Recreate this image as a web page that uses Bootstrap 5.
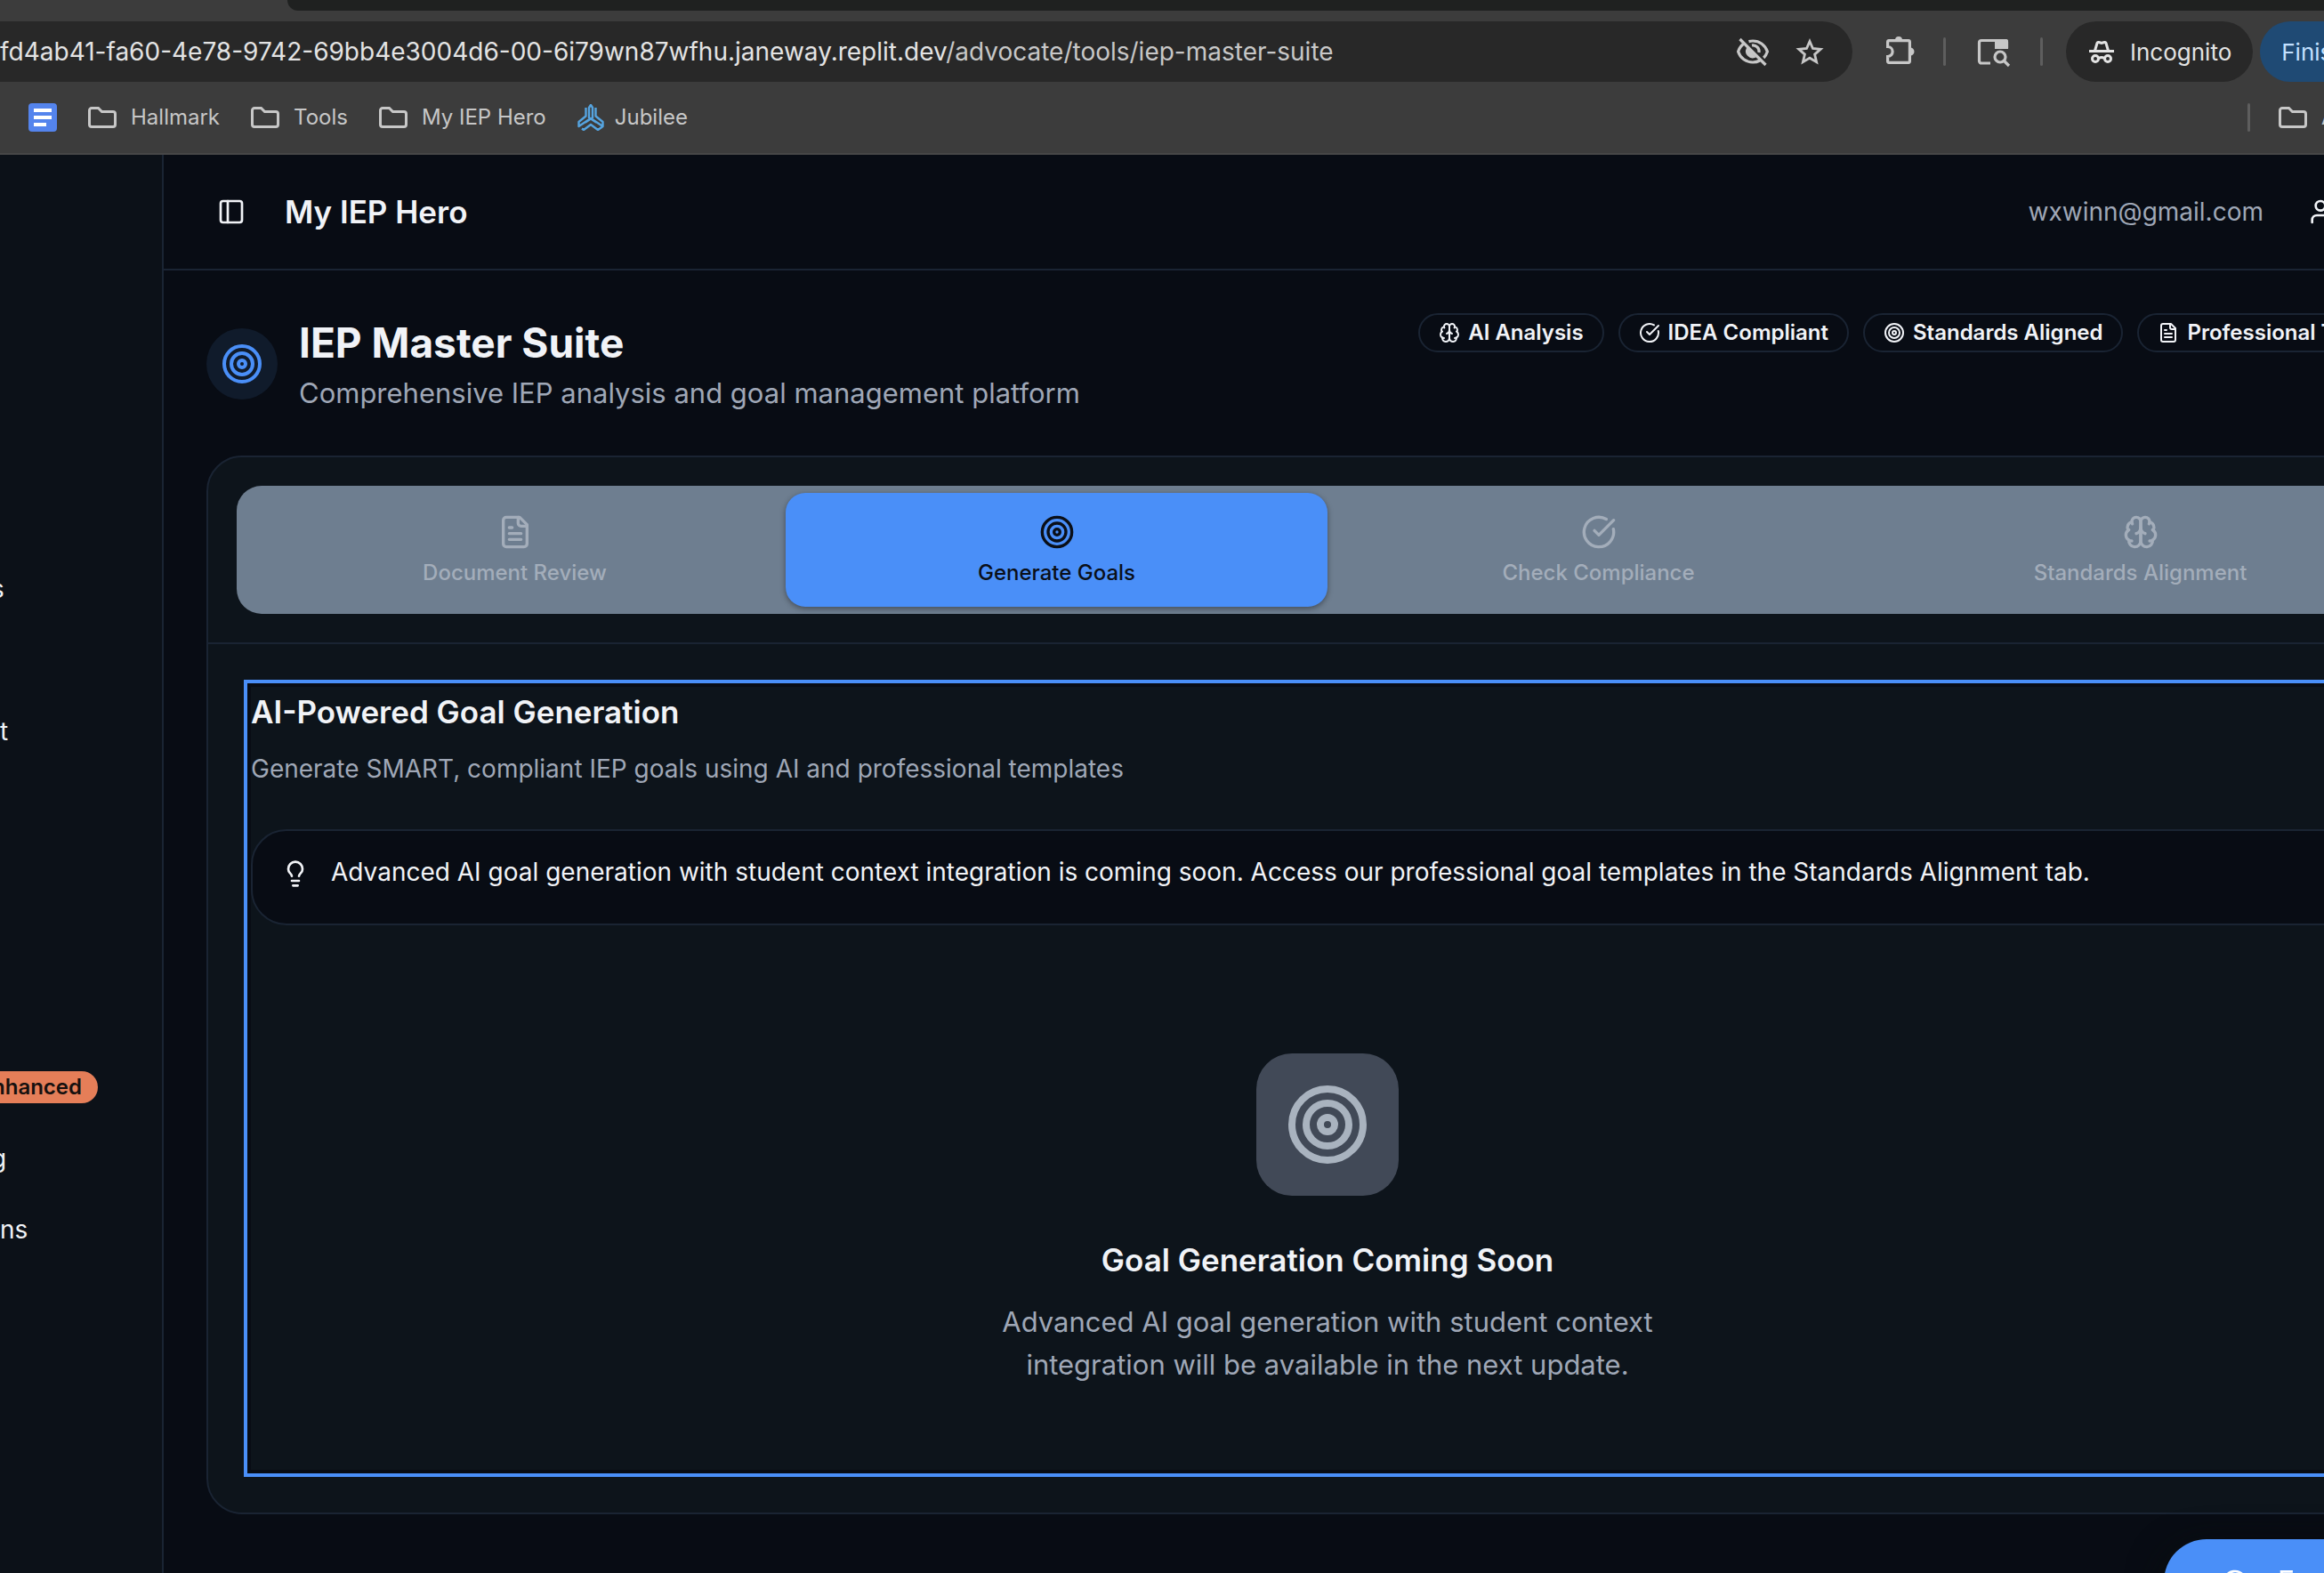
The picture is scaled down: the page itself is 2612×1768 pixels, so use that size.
<!DOCTYPE html>
<html lang="en">
<head>
<meta charset="utf-8">
<meta name="viewport" content="width=device-width, initial-scale=1">
<title>My IEP Hero</title>
<link href="https://cdn.jsdelivr.net/npm/bootstrap@5.3.0/dist/css/bootstrap.min.css" rel="stylesheet">
<style>
:root{--page:#080c14;--panel:#0d141b;--line:#1a2433;--blue:#4a8ff8;--ink:#f1f3f7;--soft:#9fa7b6}
html,body{height:100%}
body{font-family:Inter,"Noto Sans",sans-serif;font-size:28px;line-height:40px;background:var(--page);color:var(--ink);overflow:hidden}
svg{display:block;flex:none}
.lu{fill:none;stroke:currentColor;stroke-width:2;stroke-linecap:round;stroke-linejoin:round}
a,a:hover{color:inherit;text-decoration:none}
.btn-plain{border:0;padding:0;background:none;color:inherit}

.browser{background:#3c3c3c;border-bottom:2px solid #474747;color:#c7c7c7}
.tabstrip{height:12px;margin-left:323px;background:#1f2120;border-bottom-left-radius:20px}
.toolbar{padding:12px 0}
.address{height:68px;background:#282828;border-radius:0 34px 34px 0;padding-right:32px;min-width:0;gap:28px}
.host{color:#e3e3e3}
.tools{width:530px;padding-left:34px}
.sep{flex:none;width:3px;height:32px;border-radius:2px;background:#5e5e5e}
.tools .sep{margin:0 26px 0 32px}
.chip{height:68px;border-radius:34px;padding:2px 24px 0;background:#282828;color:#e3e3e3;font-size:26px}
.chip-blue{background:#1f4a74;color:#c2e0ff}
.bookmarks{height:68px;font-size:24px;line-height:32px;padding:0 0 12px 32px;gap:35px}
.bookmarks a{gap:16px}
.bookmarks .jubilee{gap:12px}
.other{width:86px;gap:32px}

.side{width:184px;background:#0c1118;border-right:2px solid var(--line);padding-top:448px}
.side li{height:80px}
.side .cut{text-indent:-10px}
.tag{height:36px;width:110px;background:#e57e58;color:#16110f;font-size:24px;font-weight:600;border-radius:0 18px 18px 0;padding-right:18px}
.stage{margin-right:-188px;min-width:0}
.apphead{height:130px;border-bottom:2px solid var(--line);padding-left:60px;padding-right:176px}
.apphead .brand{margin-left:44px}
.brand{font-size:35px;font-weight:600;line-height:56px}
.soft{color:var(--soft)}
.page{padding:48px}
.disc{width:80px;height:80px;background:#101b2b;color:var(--blue)}
.ttl{font-size:46px;line-height:66px;font-weight:700}
.sub{font-size:31px;line-height:48px}
.pill{height:44px;border:2px solid var(--line);border-radius:22px;padding:0 21px;gap:9px;font-size:24px;font-weight:600}
.panel{background:var(--panel);border:2px solid var(--line);border-radius:40px;margin-top:46px}
.panel-top{padding:32px;border-bottom:2px solid var(--line)}
.tabs{background:#6e7e90;border-radius:28px;padding:8px}
.tabs .nav-link{height:128px;border-radius:22px;padding:24px 0 0;gap:10px;font-size:24px;line-height:32px;font-weight:500;color:#a3adba}
.tabs .nav-link.active{background:var(--blue);color:#0a0f18;box-shadow:0 2px 6px rgba(0,0,0,.4)}
.panel-body{padding:48px}
.focusbox{box-shadow:0 0 0 4px var(--page),0 0 0 8px var(--blue)}
.note{margin-top:48px;min-height:108px;background:var(--page);border:2px solid var(--line);border-radius:40px;padding:24px 32px;gap:24px}
.note p{line-height:44px}
.note svg{margin-top:8px}
.empty{padding:96px 0 94px;margin-top:48px}
.tile{width:160px;height:160px;border-radius:40px;background:#414957;color:#a9b3bf;margin-bottom:44px}
.empty .sub{max-width:800px;margin-top:18px}
.fab{position:fixed;left:calc(100% - 180px);top:calc(100% - 38px);height:96px;width:340px;border-radius:48px;background:var(--blue);color:#fff;padding:0 64px;gap:32px;font-size:32px;box-shadow:0 10px 40px rgba(10,14,12,.9)}
</style>
</head>
<body class="d-flex flex-column">
<svg width="0" height="0" class="position-absolute" aria-hidden="true">
  <symbol id="target" viewBox="0 0 24 24"><circle cx="12" cy="12" r="10"/><circle cx="12" cy="12" r="6"/><circle cx="12" cy="12" r="2"/></symbol>
  <symbol id="doc" viewBox="0 0 24 24"><path d="M15 2H6a2 2 0 0 0-2 2v16a2 2 0 0 0 2 2h12a2 2 0 0 0 2-2V7Z"/><path d="M14 2v4a2 2 0 0 0 2 2h4M10 9H8M16 13H8M16 17H8"/></symbol>
  <symbol id="check" viewBox="0 0 24 24"><path d="M21.801 10A10 10 0 1 1 17 3.335"/><path d="m9 11 3 3L22 4"/></symbol>
  <symbol id="brain" viewBox="0 0 24 24"><path d="M12 5a3 3 0 1 0-5.997.125 4 4 0 0 0-2.526 5.77 4 4 0 0 0 .556 6.588A4 4 0 1 0 12 18Z"/><path d="M12 5a3 3 0 1 1 5.997.125 4 4 0 0 1 2.526 5.77 4 4 0 0 1-.556 6.588A4 4 0 1 1 12 18Z"/><path d="M15 13a4.5 4.5 0 0 1-3-4 4.5 4.5 0 0 1-3 4M17.599 6.5a3 3 0 0 0 .399-1.375M6.003 5.125A3 3 0 0 0 6.401 6.5M3.477 10.896a4 4 0 0 1 .585-.396M19.938 10.5a4 4 0 0 1 .585.396M6 18a4 4 0 0 1-1.967-.516M19.967 17.484A4 4 0 0 1 18 18"/></symbol>
  <symbol id="folder" viewBox="0 0 32 24"><path d="M1.500 4a2.500 2.500 0 0 1 2.500-2.500h7.500l4 4H28A2.500 2.500 0 0 1 30.500 8v12a2.500 2.500 0 0 1-2.500 2.500H4A2.500 2.500 0 0 1 1.500 20Z" fill="none" stroke="currentColor" stroke-width="3"/></symbol>
</svg>

<header class="browser flex-shrink-0 overflow-hidden text-nowrap">
  <div class="tabstrip"></div>
  <div class="toolbar d-flex">
    <div class="address d-flex align-items-center flex-grow-1">
      <div class="flex-grow-1 overflow-hidden"><span class="host">fd4ab41-fa60-4e78-9742-69bb4e3004d6-00-6i79wn87wfhu.janeway.replit.dev</span>/advocate/tools/iep-master-suite</div>
      <button class="btn-plain" aria-label="Third-party cookies blocked"><svg width="40" height="36" viewBox="0 0 40 36" fill="none" stroke="currentColor" stroke-width="3.200"><path d="M11 8.500C7.500 10.500 4.800 14 3.600 18c2.400 7.500 9 12 16.400 12 3 0 5.600-.7 8-2M15.500 6.600C17 6.200 18.500 6 20 6c7.500 0 14 4.500 16.400 12-.9 2.700-2.200 5-4.200 7"/><path d="M19 11a7 7 0 0 1 8 8"/><path d="M13.500 14.500a7 7 0 0 0 9 9.500z" fill="currentColor" stroke-width="1.500"/><path d="M5.500 4l29 29"/></svg></button>
      <button class="btn-plain" aria-label="Bookmark this tab"><svg width="32" height="32" viewBox="0 0 32 32" fill="none" stroke="currentColor" stroke-width="2.800"><path d="M16 4.500l3.500 8 8.700.8-6.600 5.800 2 8.600L16 23.200l-7.600 4.500 2-8.600-6.600-5.800 8.700-.8z"/></svg></button>
    </div>
    <div class="tools d-flex align-items-center flex-shrink-0">
      <button class="btn-plain" aria-label="Extensions"><svg width="36" height="36" viewBox="0 0 36 36" fill="none" stroke="currentColor" stroke-width="3.200"><path d="M7 5.600h22A1.500 1.500 0 0 1 30.400 7v22a1.500 1.500 0 0 1-1.400 1.400H7A1.500 1.500 0 0 1 5.600 29v-5.500a5.500 5.500 0 0 0 0-11V7A1.500 1.500 0 0 1 7 5.600z"/><path d="M14 5a4 4 0 0 1 8 0zM31 13.500a4.500 4.500 0 0 1 0 9z" fill="currentColor" stroke="none"/></svg></button>
      <span class="sep"></span>
      <button class="btn-plain" aria-label="Search tabs"><svg width="48" height="36" viewBox="0 0 48 36" fill="none" stroke="currentColor" stroke-width="3.200"><path d="M24 31H14a2.500 2.500 0 0 1-2.500-2.500V8A2.500 2.500 0 0 1 14 5.500h27A2 2 0 0 1 42.500 8v6"/><path d="M29 4h13a2 2 0 0 1 2 2v9H29z" fill="currentColor" stroke="none"/><circle cx="35" cy="24" r="6"/><path d="M39 28l6 6"/></svg></button>
      <span class="sep"></span>
      <button class="btn-plain chip d-flex align-items-center gap-3 flex-shrink-0"><svg width="32" height="32" viewBox="0 0 32 32" fill="none" stroke="currentColor" stroke-width="3"><path d="M8.500 14L11 5.500a1.500 1.500 0 0 1 2-1l3 1 3-1a1.500 1.500 0 0 1 2 1L23.500 14M2 14.500h28M13 22.500q3-2 6 0"/><circle cx="9" cy="23" r="3.500"/><circle cx="23" cy="23" r="3.500"/></svg>Incognito</button>
      <button class="btn-plain chip chip-blue ms-2 flex-shrink-0">Finish update</button>
    </div>
  </div>
  <nav class="bookmarks d-flex align-items-center">
    <a href="#" aria-label="Docs"><svg width="32" height="32" viewBox="0 0 32 32"><rect width="32" height="32" rx="4" fill="#5484ed"/><path d="M6 8h20M6 16h20M6 24h14" stroke="#fff" stroke-width="4"/></svg></a>
    <a href="#" class="d-flex align-items-center"><svg width="32" height="24"><use href="#folder"/></svg>Hallmark</a>
    <a href="#" class="d-flex align-items-center"><svg width="32" height="24"><use href="#folder"/></svg>Tools</a>
    <a href="#" class="d-flex align-items-center"><svg width="32" height="24"><use href="#folder"/></svg>My IEP Hero</a>
    <a href="#" class="jubilee d-flex align-items-center"><svg width="30" height="30" viewBox="0 0 30 30" fill="none" stroke="#55a4e0" stroke-width="2.400" stroke-linejoin="round"><path d="M9.500 4v9.500L1.500 20v5l13.500-9 13.500 9v-5l-8-6.500V4M13 16V4l2-3 2 3v12M5 27.500l2 1.500 8-6 8 6 5-3.500M9 20.500l6-4 6 4"/></svg>Jubilee</a>
    <div class="other d-flex align-items-center ms-auto flex-shrink-0"><span class="sep"></span><a href="#" class="d-flex align-items-center"><svg width="32" height="24"><use href="#folder"/></svg>All Bookmarks</a></div>
  </nav>
</header>

<div class="d-flex flex-grow-1 overflow-hidden">
  <aside class="side flex-shrink-0 overflow-hidden">
    <ul class="list-unstyled m-0">
      <li class="d-flex align-items-center"><a href="#" class="cut">s</a></li>
      <li></li>
      <li class="d-flex align-items-center"><a href="#">t</a></li>
      <li></li><li></li><li></li><li></li>
      <li class="d-flex align-items-center"><span class="tag d-flex align-items-center justify-content-end overflow-hidden">nhanced</span></li>
      <li class="d-flex align-items-center"><a href="#" class="cut">g</a></li>
      <li class="d-flex align-items-center"><a href="#">ns</a></li>
    </ul>
  </aside>
  <main class="stage flex-grow-1">
    <div class="apphead d-flex align-items-center">
      <button class="btn-plain" aria-label="Toggle sidebar"><svg class="lu" width="32" height="32" viewBox="0 0 24 24"><rect x="3" y="3" width="18" height="18" rx="2"/><path d="M9 3v18"/></svg></button>
      <span class="brand">My IEP Hero</span>
      <span class="soft ms-auto me-5">wxwinn@gmail.com</span>
      <button class="btn-plain" aria-label="Account"><svg class="lu" width="32" height="32" viewBox="0 0 24 24"><path d="M19 21v-2a4 4 0 0 0-4-4H9a4 4 0 0 0-4 4v2"/><circle cx="12" cy="7" r="4"/></svg></button>
    </div>
    <div class="page">
      <div class="d-flex justify-content-between align-items-start">
        <div class="d-flex align-items-center gap-4">
          <div class="disc rounded-circle d-flex align-items-center justify-content-center"><svg class="lu" width="48" height="48"><use href="#target"/></svg></div>
          <div>
            <h1 class="ttl m-0">IEP Master Suite</h1>
            <p class="sub soft m-0">Comprehensive IEP analysis and goal management platform</p>
          </div>
        </div>
        <div class="d-flex gap-3 text-nowrap">
          <span class="pill d-flex align-items-center"><svg class="lu" width="24" height="24"><use href="#brain"/></svg>AI Analysis</span>
          <span class="pill d-flex align-items-center"><svg class="lu" width="24" height="24"><use href="#check"/></svg>IDEA Compliant</span>
          <span class="pill d-flex align-items-center"><svg class="lu" width="24" height="24"><use href="#target"/></svg>Standards Aligned</span>
          <span class="pill d-flex align-items-center"><svg class="lu" width="24" height="24"><use href="#doc"/></svg>Professional Templates</span>
        </div>
      </div>
      <section class="panel">
        <div class="panel-top">
          <div class="tabs nav nav-pills nav-justified flex-nowrap" role="tablist">
            <button class="nav-link d-flex flex-column align-items-center" role="tab"><svg class="lu" width="40" height="40"><use href="#doc"/></svg>Document Review</button>
            <button class="nav-link active d-flex flex-column align-items-center" role="tab" aria-selected="true"><svg class="lu" width="40" height="40"><use href="#target"/></svg>Generate Goals</button>
            <button class="nav-link d-flex flex-column align-items-center" role="tab"><svg class="lu" width="40" height="40"><use href="#check"/></svg>Check Compliance</button>
            <button class="nav-link d-flex flex-column align-items-center" role="tab"><svg class="lu" width="40" height="40"><use href="#brain"/></svg>Standards Alignment</button>
          </div>
        </div>
        <div class="panel-body">
          <div class="focusbox" role="tabpanel">
            <h2 class="brand m-0">AI-Powered Goal Generation</h2>
            <p class="soft mt-3 mb-0">Generate SMART, compliant IEP goals using AI and professional templates</p>
            <div class="note d-flex align-items-start">
              <svg class="lu" width="32" height="32" viewBox="0 0 24 24"><path d="M15 14c.2-1 .7-1.700 1.500-2.500 1-.9 1.500-2.200 1.500-3.500A6 6 0 0 0 6 8c0 1 .2 2.200 1.500 3.500.7.7 1.300 1.500 1.500 2.500M9 18h6M10 22h4"/></svg>
              <p class="m-0">Advanced AI goal generation with student context integration is coming soon. Access our professional goal templates in the Standards Alignment tab.</p>
            </div>
            <div class="empty d-flex flex-column align-items-center text-center">
              <div class="tile d-flex align-items-center justify-content-center"><svg class="lu" width="96" height="96"><use href="#target"/></svg></div>
              <h3 class="brand m-0">Goal Generation Coming Soon</h3>
              <p class="sub soft mb-0">Advanced AI goal generation with student context integration will be available in the next update.</p>
            </div>
          </div>
        </div>
      </section>
    </div>
  </main>
</div>
<button class="fab btn-plain d-flex align-items-center text-nowrap"><svg class="lu" width="32" height="32" viewBox="0 0 24 24"><path d="M7.900 20A9 9 0 1 0 4 16.100L2 22Z"/></svg>Feedback</button>
<script src="https://cdn.jsdelivr.net/npm/bootstrap@5.3.0/dist/js/bootstrap.bundle.min.js"></script>
</body>
</html>
